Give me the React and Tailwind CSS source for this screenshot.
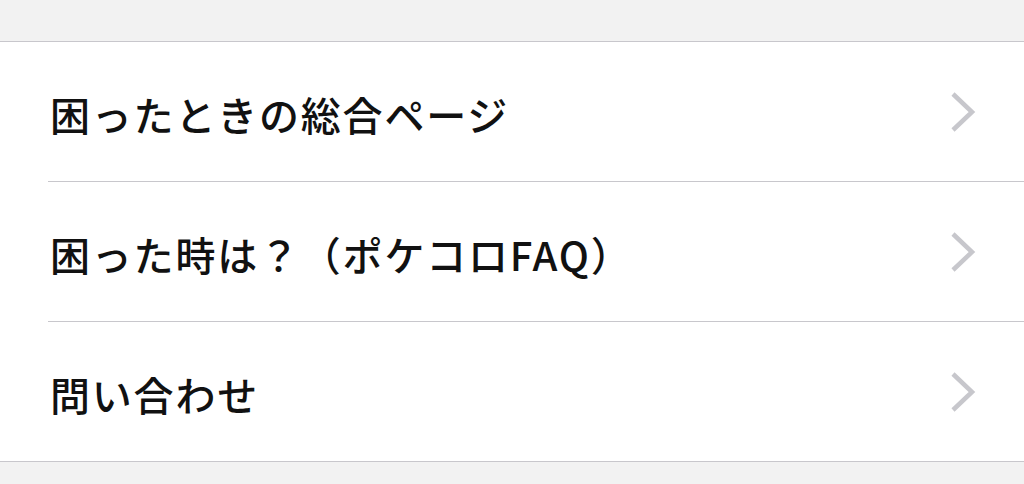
import React from "react";

const items = ["困ったときの総合ページ", "困った時は？（ポケコロFAQ）", "問い合わせ"];

function Chevron() {
  return (
    <svg width="28" height="42" viewBox="0 0 28 42" className="shrink-0">
      <path
        d="M4 3 L23 21 L4 39"
        fill="none"
        stroke="#c7c7cc"
        strokeWidth="4.5"
        strokeLinecap="butt"
        strokeLinejoin="miter"
      />
    </svg>
  );
}

export default function App() {
  return (
    <div
      className="w-[1024px] h-[484px] bg-[#f2f2f2] overflow-hidden"
      style={{ fontFamily: '"Noto Sans CJK JP", "Noto Sans", sans-serif' }}
    >
      <div className="h-[41px]" />
      <div className="bg-white border-y border-[#c8c7cc]">
        {items.map((label, i) => {
          const last = i === items.length - 1;
          return (
            <div key={label} className="pl-12">
              <div
                className={`flex items-center justify-between pr-[47px] ${
                  last ? "h-[139px]" : "h-[140px] border-b border-[#c8c7cc]"
                }`}
              >
                <span className="pl-[2px] pt-[4px] text-[40px] font-medium text-[#111] leading-none tracking-[1.8px]">
                  {label}
                </span>
                <Chevron />
              </div>
            </div>
          );
        })}
      </div>
    </div>
  );
}
